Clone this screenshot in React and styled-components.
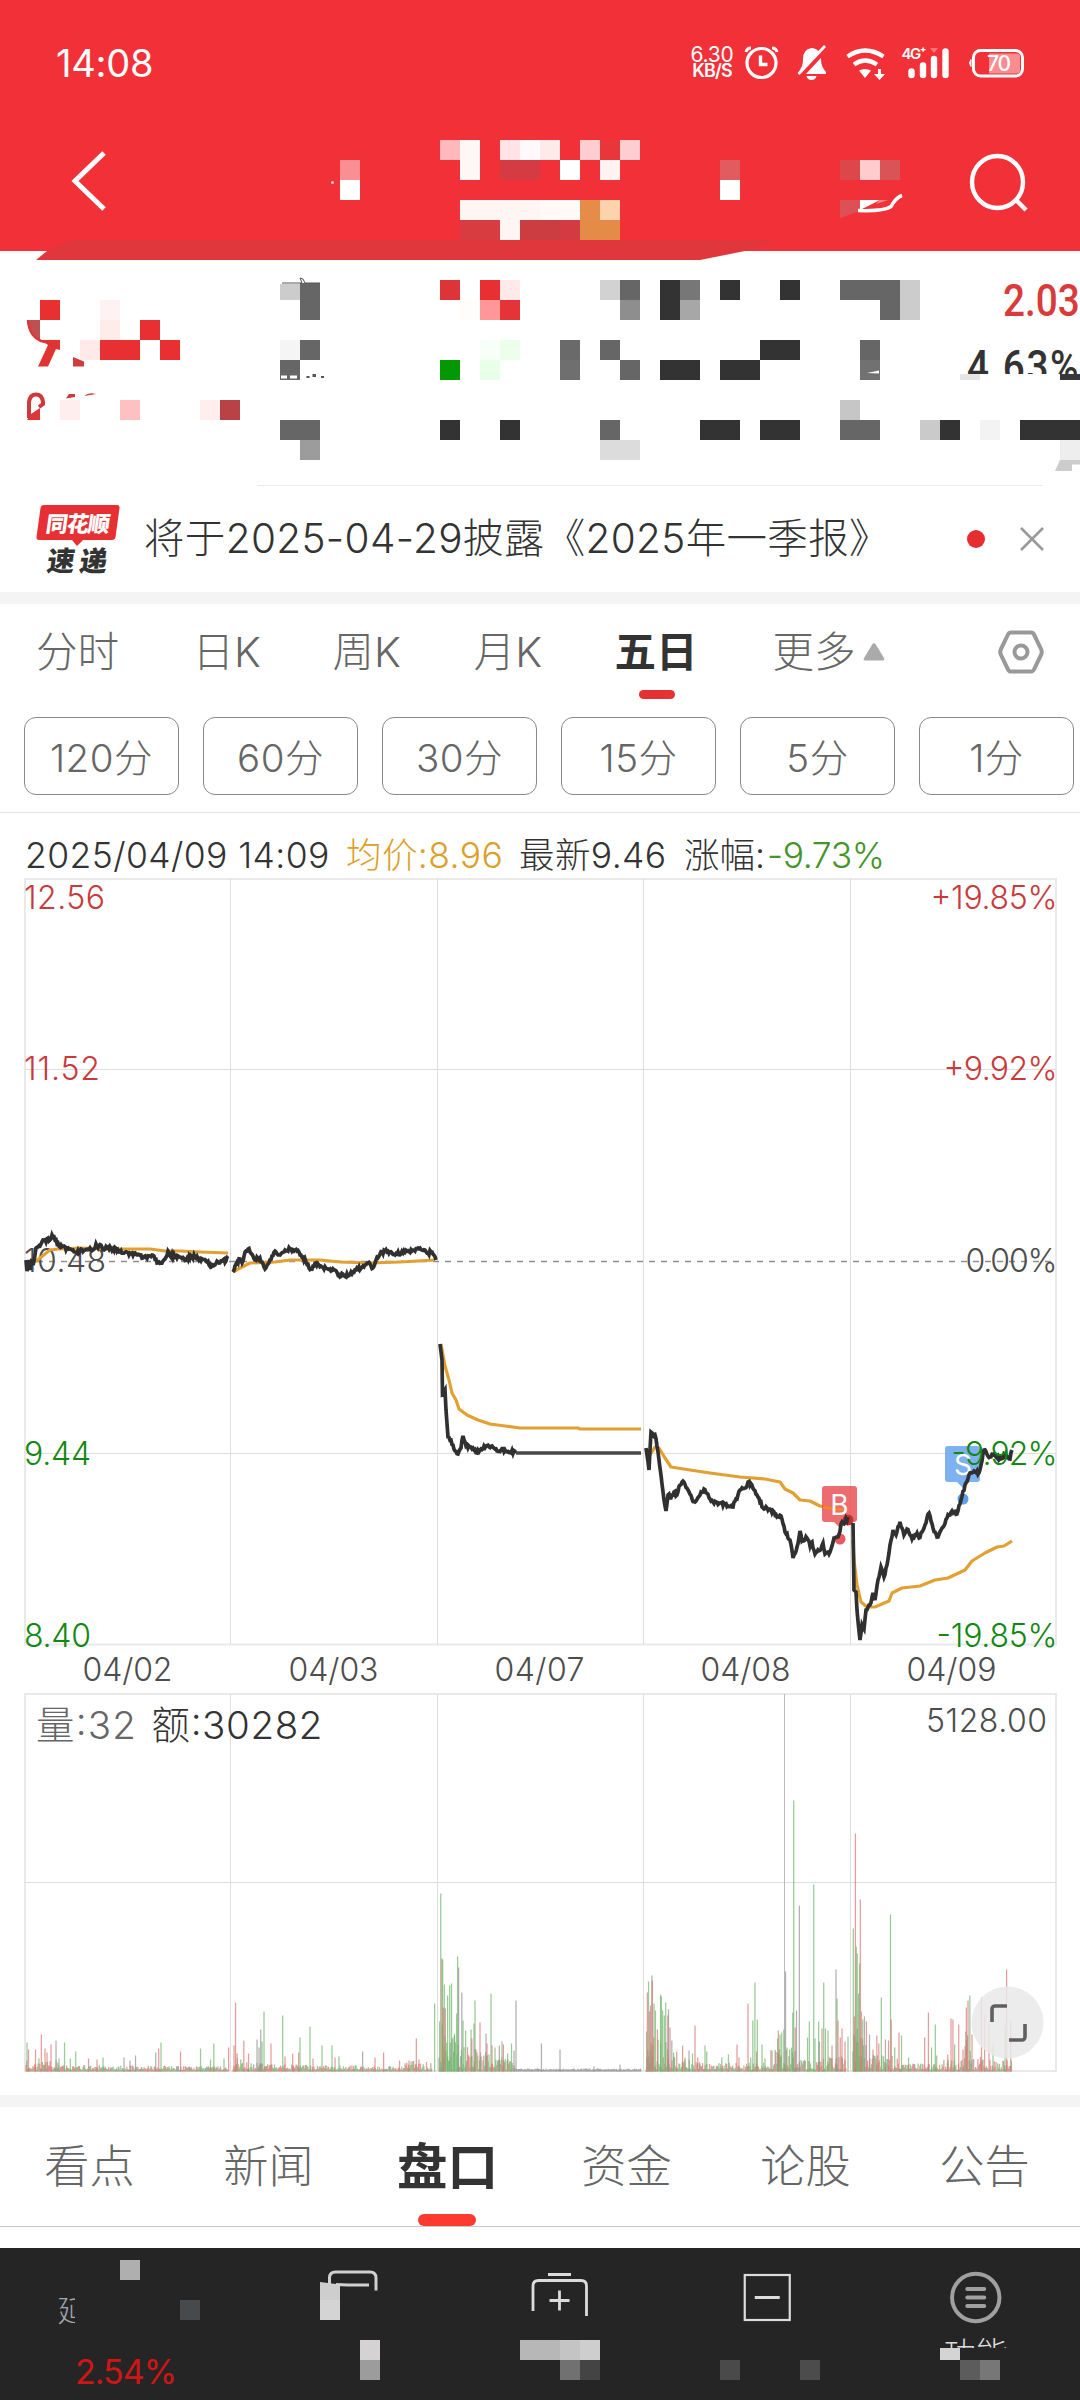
import React from 'react';
import styled, { createGlobalStyle } from 'styled-components';

const GlobalStyle = createGlobalStyle`
  * { box-sizing: border-box; }
  body {
    margin: 0;
    background: #fff;
    font-family: Inter, 'Noto Sans CJK SC', sans-serif;
    font-weight: 300;
    color: #333;
  }
`;

const Page = styled.div`
  width: 1080px;
  height: 2400px;
  overflow: hidden;
  display: flex;
  flex-direction: column;
  background: #fff;
`;

const Top = styled.div`
  position: relative;
  height: 485px;
  flex: none;
`;

const Header = styled.header`
  height: 251px;
  background: #f23038;
  color: #fff;
`;

const StatusBar = styled.div`
  height: 124px;
  padding: 2px 55px 0 56px;
  display: flex;
  align-items: center;
  justify-content: space-between;
`;

const Clock = styled.span`
  font-size: 38px;
  font-weight: 400;
  letter-spacing: -0.2px;
`;

const StatusIcons = styled.div`
  display: flex;
  align-items: center;
  svg { display: block; }
`;

const Speed = styled.div`
  width: 42px;
  margin-right: 10px;
  display: flex;
  flex-direction: column;
  align-items: center;
  font-size: 21px;
  line-height: 16px;
  font-weight: 400;
  letter-spacing: -0.3px;
  b {
    font-size: 18px;
    font-weight: 600;
    letter-spacing: -0.9px;
  }
`;

const TitleBar = styled.div`
  height: 116px;
  padding: 0 50px 0 70px;
  display: flex;
  align-items: center;
  justify-content: space-between;
`;

const Quote = styled.section`
  height: 234px;
  padding-top: 26px;
  display: flex;
  flex-direction: column;
  align-items: flex-end;
`;

const QuoteValue = styled.div`
  width: ${(p) => p.$width}px;
  height: ${(p) => p.$height}px;
  margin-bottom: ${(p) => p.$after || 0}px;
  overflow: hidden;
  white-space: nowrap;
  color: ${(p) => p.$color};
  font-family: Roboto, sans-serif;
  font-size: 45px;
  font-weight: 500;
  line-height: 48px;
  letter-spacing: ${(p) => p.$spacing || 0}px;
  span {
    display: inline-block;
    transform: scaleX(0.86);
    transform-origin: left;
  }
`;

const Mosaic = styled.svg`
  position: absolute;
  left: 0;
  top: 0;
  pointer-events: none;
`;

const Notice = styled.section`
  height: 107px;
  padding: 0 35px 0 36px;
  display: flex;
  align-items: center;
  flex: none;
`;

const Logo = styled.div`
  width: 84px;
  height: 74px;
  margin-right: 24px;
`;

const NoticeText = styled.div`
  flex: 1;
  font-size: 40.5px;
  letter-spacing: 0.35px;
  line-height: 60px;
  white-space: nowrap;
`;

const Dot = styled.i`
  width: 18px;
  height: 18px;
  border-radius: 50%;
  background: #e62e31;
  margin-right: 34px;
`;

const Band = styled.div`
  height: 12px;
  background: #f4f4f4;
  flex: none;
`;

const PeriodTabs = styled.nav`
  height: 113px;
  padding: 0 0 0 36px;
  display: flex;
  align-items: flex-start;
  flex: none;
  font-size: 41.5px;
  line-height: 60px;
  color: #666;
`;

const PeriodTab = styled.div`
  position: relative;
  margin: 18px ${(p) => p.$gap}px 0 0;
  display: flex;
  align-items: center;
  white-space: nowrap;
  font-weight: ${(p) => (p.$active ? 700 : 300)};
  color: ${(p) => (p.$active ? '#333' : '#666')};
  &::after {
    content: '';
    display: ${(p) => (p.$active ? 'block' : 'none')};
    position: absolute;
    left: 24px;
    top: 68px;
    width: 36px;
    height: 9px;
    border-radius: 5px;
    background: #e43234;
  }
`;

const MinuteRow = styled.div`
  height: 96px;
  padding-left: 24px;
  display: flex;
  gap: 24px;
  flex: none;
  border-bottom: 1px solid #e4e4e4;
`;

const MinuteButton = styled.div`
  width: 155px;
  height: 78px;
  padding-bottom: 3px;
  flex: none;
  display: flex;
  align-items: center;
  justify-content: center;
  border: 1px solid #888;
  border-radius: 12px;
  font-size: 38.5px;
  letter-spacing: 0.5px;
  color: #666;
`;

const InfoLine = styled.div`
  height: 65px;
  padding: 18px 0 0 25px;
  display: flex;
  flex: none;
  font-size: 35.5px;
  line-height: 50px;
  white-space: nowrap;
`;

const Info = styled.span`
  width: ${(p) => p.$width}px;
  color: ${(p) => p.$color || '#333'};
  letter-spacing: ${(p) => p.$spacing || 0}px;
`;

const ChartArea = styled.div`
  position: relative;
  height: 1217px;
  flex: none;
  svg { display: block; }
`;

const SectionTabs = styled.nav`
  height: 119px;
  width: 1074px;
  display: flex;
  flex: none;
`;

const SectionTab = styled.div`
  position: relative;
  flex: 1;
  padding-top: 27px;
  text-align: center;
  line-height: 66px;
  font-size: ${(p) => (p.$active ? 50.5 : 45.2)}px;
  font-weight: ${(p) => (p.$active ? 700 : 300)};
  color: ${(p) => (p.$active ? '#333' : '#666')};
  &::after {
    content: '';
    display: ${(p) => (p.$active ? 'block' : 'none')};
    position: absolute;
    left: 60px;
    bottom: 0;
    width: 58px;
    height: 12px;
    border-radius: 6px;
    background: #fc3a30;
  }
`;

const Gap = styled.div`
  height: 22px;
  flex: none;
  border-top: 1px solid #c8c8c8;
`;

const BottomNav = styled.footer`
  position: relative;
  flex: 1;
  background: #252525;
  display: flex;
`;

const NavItem = styled.div`
  width: ${(p) => p.$width || 208.5}px;
  padding-top: 20px;
  display: flex;
  flex-direction: column;
  align-items: center;
`;

const IndexName = styled.div`
  width: 17px;
  height: 32px;
  margin: 26px 114px 31px 0;
  overflow: hidden;
  font-size: 30px;
  line-height: 32px;
  color: #a3a8b0;
`;

const IndexChange = styled.div`
  padding-left: 5px;
  font-size: 34px;
  line-height: 30px;
  font-weight: 400;
  letter-spacing: -1px;
  color: #d01515;
`;

const NavLabel = styled.div`
  height: 13px;
  margin-top: 7px;
  overflow: hidden;
  font-size: 32px;
  line-height: 38px;
  color: #ddd;
`;

// [y, x, colour, width, height], on a 20px grid
const topTiles = [
  [140, 440, '#ffb9bc'], [140, 460, '#fff6f6'], [140, 500, '#ffe3e6'], [140, 520, '#fff9fb'],
  [140, 540, '#ffeaea'], [140, 580, '#fecdd2'], [140, 600, '#e8363a'], [140, 620, '#fecdd2'],
  [160, 340, '#f98e93'], [160, 460, '#fff6f6'], [160, 500, '#d53b42', 40], [160, 560, '#fff'],
  [160, 600, '#fff2f2'], [160, 720, '#e15b5f'], [160, 840, '#db474b'], [160, 860, '#ffcbcd'],
  [160, 880, '#d95357'], [180, 340, '#fff'], [180, 720, '#fff'],
  [200, 460, '#fff6f4', 80], [200, 540, '#fff9f8', 40], [200, 580, '#e58c48'], [200, 600, '#ffd2ae'],
  [220, 460, '#d83b40', 40], [220, 500, '#fff6f4'], [220, 520, '#cb3d41', 40], [220, 560, '#d33a41'],
  [220, 580, '#e48c47', 40],
  [284, 280, '#ccc', 20, 16], [283, 300, '#666', 20, 37], [280, 440, '#dd3437'], [280, 480, '#e83032'],
  [280, 500, '#ffe9e9'], [280, 600, '#d2d2d2'], [280, 620, '#666'], [280, 660, '#333', 20, 40],
  [280, 680, '#777'], [280, 720, '#333'], [280, 780, '#333'], [280, 840, '#666', 60],
  [280, 900, '#ccc', 20, 40],
  [300, 40, '#e83032'], [300, 100, '#fff2f2'], [300, 460, '#fffcfc'], [300, 480, '#ff9698'],
  [300, 500, '#e43437'], [300, 620, '#8e8e8e'], [300, 680, '#a7a7a7'], [300, 880, '#666'],
  [320, 100, '#ffebe9'], [320, 140, '#e83032'],
  [340, 80, '#ffe9e9'], [340, 100, '#e83032', 40], [340, 160, '#e83032'], [340, 280, '#f5f5f5'],
  [340, 300, '#666'], [340, 480, '#f8fff8'], [340, 500, '#ebffeb'], [340, 560, '#6a6a6a'],
  [340, 600, '#666'], [340, 760, '#333', 40], [340, 860, '#666'],
  [360, 280, '#666'], [360, 440, '#059805'], [360, 480, '#e8ffe8'], [360, 560, '#6f6f6f'],
  [360, 620, '#666'], [360, 660, '#333', 40], [360, 720, '#333', 40], [360, 860, '#717171'],
  [374, 960, '#e5e5e5', 20, 6], [374, 1060, '#383838', 20, 6],
  [400, 60, '#fee'], [400, 120, '#ffc0c2'], [400, 200, '#fee'], [400, 220, '#b94246'], [400, 840, '#c6c6c6'],
  [420, 280, '#666', 40], [420, 440, '#333'], [420, 500, '#333'], [420, 600, '#666'],
  [420, 700, '#333', 40], [420, 760, '#333', 40], [420, 840, '#666', 40], [420, 920, '#cacaca'],
  [420, 940, '#333'], [420, 980, '#f3f3f3'], [420, 1020, '#333', 60],
  [440, 300, '#9c9c9c'], [440, 600, '#dcdcdc', 40], [440, 1060, '#eee'],
];

const navTiles = [
  [12, 120, '#afafaf'], [52, 180, '#464a4d'], [92, 360, '#d4d2d2'], [112, 360, '#9c9c9c'],
  [92, 520, '#b7b7b7', 40], [92, 560, '#c5c4c4'], [92, 580, '#cfcece'], [112, 560, '#717171'],
  [112, 580, '#444'], [112, 720, '#4a4a4a'], [112, 800, '#4c4c4c'], [100, 940, '#d4d4d4', 20, 12],
  [112, 960, '#5c5c5c'], [112, 980, '#777'], [52, 320, '#d4d4d4'],
];

const Tiles = ({ data }) =>
  data.map(([y, x, fill, w = 20, h = 20]) => (
    <rect key={`${x}-${y}`} x={x} y={y} width={w} height={h} fill={fill} shapeRendering="crispEdges" />
  ));

// small repeatable noise
const noise = (n) => {
  const v = Math.sin(n * 127.1 + 11.7) * 43758.5453;
  return v - Math.floor(v);
};

const priceDays = [
  '26,1260 27,1271 29,1260 30,1270 32,1259 33,1265 35,1255 36,1248 40,1246 43,1240 46,1242 48,1238 50,1240 52,1235 55,1240 58,1243 60,1247 64,1246 66,1250 70,1249 75,1252 80,1251 85,1250 90,1248 93,1250 96,1244 98,1248 101,1245 104,1250 108,1247 113,1249 118,1250 123,1253 130,1253 137,1255 143,1258 150,1256 154,1256 157,1263 162,1263 165,1259 168,1251 170,1256 176,1256 180,1257 186,1260 192,1256 200,1259 207,1262 212,1266 218,1262 222,1261 226,1261 228,1256',
  '233,1272 236,1264 240,1259 242,1263 246,1251 248,1249 250,1252 253,1256 255,1260 258,1258 262,1262 265,1269 268,1264 272,1256 276,1252 280,1255 284,1252 290,1249 295,1250 299,1252 302,1257 306,1262 311,1269 316,1263 322,1267 328,1269 334,1270 340,1277 343,1274 348,1276 353,1272 358,1269 363,1266 367,1263 370,1264 373,1268 376,1260 380,1254 385,1251 390,1252 397,1254 405,1252 412,1251 418,1248 422,1250 427,1253 432,1252 436,1260',
  '440,1344 442,1360 442.5,1395 445,1390 446,1410 448,1437 451,1440 455,1451 458,1454 461,1448 463,1436 466,1446 470,1447 474,1450 477,1453 481,1449 486,1446 492,1446 497,1451 505,1450 516,1453',
  '646,1448 647,1455 649,1470 650,1450 651,1432 655,1435 657,1446 659,1460 661,1475 664,1500 666,1511 668,1495 671,1498 674,1492 677,1495 680,1485 684,1482 688,1490 692,1499 695,1502 700,1495 704,1489 710,1499 713,1502 720,1503 732,1507 737,1499 740,1490 745,1488 748,1482 752,1485 757,1495 763,1508 770,1509 775,1515 781,1516 785,1532 790,1540 793,1558 797,1547 800,1531 802,1541 807,1538 810,1546 812,1542 815,1554 821,1549 823,1543 825,1554 830,1552 834,1538 838,1537 842,1522 845,1522 848,1517',
  '853,1523 854,1590 856,1592 857,1610 860,1640 862,1625 864,1629 866,1610 870,1605 873,1593 875,1600 878,1580 881,1567 884,1577 887,1565 890,1545 893,1530 896,1535 900,1522 904,1535 907,1529 912,1539 917,1533 919,1538 925,1525 929,1513 933,1528 937,1537 942,1528 947,1518 952,1511 957,1514 961,1500 965,1485 970,1473 974,1471 979,1473 984,1450 990,1457 995,1455 1000,1459 1005,1455 1010,1459 1012,1450',
];

const averageDays = [
  '35,1262 40,1258 50,1250 58,1249 80,1248 110,1249 150,1249 165,1251 180,1251 200,1252 228,1253',
  '233,1272 240,1268 250,1263 275,1262 290,1260 320,1260 340,1262 370,1263 400,1262 435,1260',
  '441,1344 445,1366 449,1380 452,1393 456,1400 459,1409 467,1415 478,1420 490,1424 505,1426 520,1428 578,1428 580,1429 641,1429',
  '650,1455 655,1447 659,1448 665,1458 671,1467 690,1470 710,1473 740,1477 765,1479 780,1482 785,1489 793,1493 800,1500 810,1501 820,1506 835,1509 847,1510',
  '853,1540 854,1560 857,1585 861,1602 867,1607 875,1607 882,1604 889,1601 892,1593 902,1588 920,1586 935,1580 948,1578 965,1570 972,1561 985,1553 997,1547 1004,1546 1012,1541',
];

// fills in the ticks between two points of a day's line
const jagged = (day) => {
  const pts = day.split(' ').map((p) => p.split(',').map(Number));
  const out = [];
  pts.forEach(([x, y], i) => {
    out.push(`${x},${y}`);
    const next = pts[i + 1];
    if (!next) return;
    for (let t = x + 1; t < next[0]; t += 1) {
      const k = (t - x) / (next[0] - x);
      out.push(`${t},${(y + (next[1] - y) * k + (noise(t) - 0.5) * 4).toFixed(1)}`);
    }
  });
  return out.join(' ');
};

// x, height, colour key
const volume =
  '27,29g 28.5,22r 35.5,22r 41.3,37r 45,23r 47,19r 51,27r 56,31k 59,13g 64.5,29g 70.3,13g 75.7,20g 88.5,13r 97,12r 103,14g 124,14k 130,11k 135.5,16k 155.7,19k 158.7,23r 161,29g 180.5,20r 200.5,23g 210.5,12g 213.8,28g 224,13g 228.6,24r ' +
  '234,26r 235.5,69r 237,18r 243.8,31r 248.5,18r 257,32k 259,24k 260.7,42k 262,30g 264,60g 271,28r 282.7,56g 285,15r 292.7,18r 298.6,19r 300,34g 310,45g 313,13r 322,26g 332,26g 335,14r 339,15g 362.6,20k 375,14r 383.6,19r 399.5,11r 409,11r 416.3,33r 419,12r 434.6,68g ' +
  '439.6,50g 440.7,178g 441.8,113r 442.6,112g 443.4,64r 444.3,87g 445.3,63r 447.6,76g 449.7,86g 451.5,88g 453,34g 454.5,36g 456.6,58g 457.6,115g 458.6,104k 461.8,79k 463,51g 465.6,41g 471,42g 471.8,33r 474,48k 475,71g 480,49r 486,38k 487,28r 491,78g 492,26r 495,24g 499.3,26k 502,30g 503.4,27r 507.6,18g 511.5,28g 514,21k 516,71k 541.4,28k 560,22k 594,5k 620,7k ' +
  '646.7,40g 647.3,79r 648.5,90g 649.5,60r 650.5,66r 651.8,96k 652.4,91r 654,68g 655.4,61g 657.4,42r 660.5,77g 661.3,75g 662.6,61g 664.3,56g 665.7,69g 667.8,56r 668.5,62k 670,44r 673.6,19g 676.7,20r 682.6,26r 685,14g 689,21k 692.5,18g 695,46r 697.7,14r 705,26g 706.7,20g 721.8,14g 728.4,17g 737,27r 739,14r 748,68r 750.7,14g 752.8,51g 754.9,89g 756.6,20r 757.3,52g 762,27g 765,13g 772,21g 777.6,33g 778.3,41r 780,37g 781.7,39g 783.8,42g 785.5,100k 787,24g 789.6,22g 792.7,59g 793.7,271g 795.2,44r 796.5,61k 799.3,166k 807.5,34g 809.3,50g 813.7,187g 815,33g 818.6,50g 819.3,30k 822,43r 823.7,89g 825.4,43g 828,41g 832,26r 836,102k 837,73g 838,51r 840.2,34r 842,43r 845,30r 848,35g ' +
  '853.3,143g 854.4,55r 855.4,238r 856.2,125g 857.2,118g 858.5,78g 859.5,108g 860.3,172r 861.3,60r 862.7,52g 864.4,55k 866.4,50r 869.5,37k 873,22r 876.8,36r 878.8,28r 881.3,74g 885.4,32k 888.5,31r 890.5,157g 891.2,52r 894.7,24g 899,39r 901.5,36g 908.5,14g 924.6,34r 928.4,59r 931.5,24g 935.3,47g 936.7,16g 947.7,17r 951,53r 952.9,52r 954.6,27g 958.7,47r 963,22r 966.3,64r 968,71r 969.8,76g 972,37r 981.5,74r 984.6,57r 989,48r 993,27g 1005,46g 1006.6,102r 1010.7,50r';

const barColors = { g: '#6db569', r: '#dd7272', k: '#8f8f8f' };

// typical height of the unremarkable minutes: from, to, start height, end height
const baseVolume = [
  [26, 58, 13, 10], [58, 228, 5, 4], [233, 265, 13, 8], [265, 405, 6, 4], [405, 432, 9, 9],
  [439, 458, 60, 34], [458, 515, 26, 10], [516, 641, 1.6, 1.6],
  [646, 672, 36, 30], [672, 700, 14, 8], [700, 770, 7, 8], [770, 795, 26, 26], [795, 846, 10, 14],
  [853, 868, 50, 26], [868, 900, 16, 14], [900, 943, 7, 7], [943, 965, 13, 12], [965, 971, 50, 44], [971, 1012, 14, 10],
];

const bars = [];
baseVolume.forEach(([from, to, a, b]) => {
  for (let x = from; x < to; x += 0.86) {
    const top = a + ((b - a) * (x - from)) / (to - from);
    const pick = noise(x * 3.3);
    let key = pick < 0.44 ? 'g' : pick < 0.86 ? 'r' : 'k';
    if (a < 2) key = 'k';
    if (from === 439 && pick < 0.8) key = 'g';
    bars.push([x, 1.5 + top * noise(x * 1.7) ** 1.3, key]);
  }
});
volume.split(' ').forEach((item) => {
  const [x, rest] = item.split(',');
  bars.push([Number(x), parseFloat(rest), rest.slice(-1)]);
});

const columns = [230.5, 437.5, 643.5, 850.5];

const priceLabels = [
  ['12.56', 909, '#c83a3c', 81], ['11.52', 1080, '#c83a3c', 76], ['10.48', 1272, '#4d4d4d', 82],
  ['9.44', 1465, '#128712', 67], ['8.40', 1647, '#128712', 67],
];
const percentLabels = [
  ['+19.85%', 909, '#c83a3c', 127], ['+9.92%', 1080, '#c83a3c', 114], ['0.00%', 1272, '#4d4d4d', 92],
  ['-9.92%', 1465, '#128712', 106], ['-19.85%', 1647, '#128712', 121],
];
const dates = ['04/02', '04/03', '04/07', '04/08', '04/09'];

const Chart = () => (
  <svg width="1080" height="1217" viewBox="0 878 1080 1217" fontFamily="Inter, 'Noto Sans CJK SC', sans-serif" fontWeight="300">
    <g fill="none" stroke="#e9e9e9" strokeWidth="2">
      <rect x="25" y="879" width="1031" height="765.5" />
      <rect x="25" y="1694" width="1031" height="377" />
    </g>
    <g stroke="#dedede" strokeWidth="1">
      {columns.map((x) => (
        <path key={x} d={`M${x} 878V1644M${x} 1694V2071`} />
      ))}
      <path d="M25 1069.5H1056M25 1453.5H1056M25 1882.5H1056" />
    </g>
    <path d="M25 1261.5H1056" stroke="#8f8f8f" strokeWidth="1.5" strokeDasharray="6 6" />
    <path d="M784.5 1694V2071" stroke="#bbb" />
    {bars.map(([x, h, key], i) => (
      <rect key={i} x={x - 0.6} y={2071.5 - h} width="1.25" height={h} fill={barColors[key]} opacity="0.7" />
    ))}
    <g fontSize="32">
      {priceLabels.map(([label, y, fill, w]) => (
        <text key={label} x="24" y={y} fill={fill} textLength={w}>{label}</text>
      ))}
      {dates.map((d, i) => (
        <text key={d} x={82.5 + i * 206} y="1681" fill="#4d4d4d" textLength="90">{d}</text>
      ))}
      <text x="926" y="1732" fill="#4d4d4d" textLength="121">5128.00</text>
    </g>
    <g fontSize="38.5">
      <text x="36" y="1739" fill="#666" textLength="100">量:32</text>
      <text x="151.5" y="1739" fill="#333" textLength="171">额:30282</text>
    </g>
    <g fill="none" stroke="#e2a032" strokeWidth="3.2" strokeLinejoin="round">
      {averageDays.map((d) => <polyline key={d} points={d} />)}
    </g>
    <g fill="#e8474b">
      <path d="M825 1486h29a3 3 0 0 1 3 3v30a3 3 0 0 1-3 3h-8l-6 6-6-6h-9a3 3 0 0 1-3-3v-30a3 3 0 0 1 3-3z" opacity=".8" />
      <circle cx="840" cy="1539" r="5.5" opacity=".9" />
      <circle cx="848" cy="1520" r="5.5" fill="#c62f33" />
    </g>
    <g fill="#5d9dec">
      <path d="M948 1446h29a3 3 0 0 1 3 3v30a3 3 0 0 1-3 3h-8l-6 6-6-6h-9a3 3 0 0 1-3-3v-30a3 3 0 0 1 3-3z" opacity=".8" />
      <circle cx="963" cy="1499" r="5.5" />
    </g>
    <path d="M823 1507L835 1509 847 1510" fill="none" stroke="#f0882c" strokeWidth="3" />
    <g fill="#fff" fontSize="28" fontWeight="400" textAnchor="middle">
      <text x="839.5" y="1515">B</text>
      <text x="963" y="1475">S</text>
    </g>
    <g fill="none" stroke="#303030" strokeWidth="3.7" strokeLinejoin="miter">
      {priceDays.map((d) => <polyline key={d} points={jagged(d)} />)}
      <path d="M516 1453H641" stroke="#484848" />
    </g>
    <g fontSize="32" textAnchor="end">
      {percentLabels.map(([label, y, fill, w]) => (
        <text key={label} x="1057.5" y={y} fill={fill} textLength={w}>{label}</text>
      ))}
    </g>
    <circle cx="1007.5" cy="2022.5" r="36" fill="#e9e9e9" opacity=".86" />
    <path d="M992 2022V2009a3 3 0 0 1 3-3H1007M1025 2024V2037a3 3 0 0 1-3 3H1009" fill="none" stroke="#606060" strokeWidth="3.6" />
  </svg>
);

const periods = [
  ['分时', 73.5], ['日K', 71.5], ['周K', 73], ['月K', 72.5], ['五日', 75],
];
const minutes = ['120分', '60分', '30分', '15分', '5分', '1分'];
const sections = ['看点', '新闻', '盘口', '资金', '论股', '公告'];

export default function App() {
  return (
    <Page>
      <GlobalStyle />
      <Top>
        <Header>
          <StatusBar>
            <Clock>14:08</Clock>
            <StatusIcons>
              <Speed>
                <span>6.30</span>
                <b>KB/S</b>
              </Speed>
              <svg width="282" height="40" viewBox="743 43 282 40" fill="none" stroke="#fff">
                <circle cx="761.5" cy="63" r="14.5" strokeWidth="3.2" />
                <path d="M760.5 55.5V64.5H767.5" strokeWidth="3.4" />
                <path d="M746 52q1-4 5-4M777 52q-1-4-5-4" strokeWidth="3" />
                <path d="M801 68q2-3 2-9q0-10 9-11q9 1 9 11q0 8 5 13v2H798z" fill="#fff" stroke="none" />
                <path d="M806.5 76h10q-1 4-5 4t-5-4z" fill="#fff" stroke="none" />
                <path d="M800 76L827 47" stroke="#f23038" strokeWidth="6" />
                <path d="M798.5 74L825 46" strokeWidth="2.8" />
                <path d="M847.5 56.5q17.5-12 36 0M854 64.5q11-8 23 0" strokeWidth="4.2" />
                <path d="M859 70.5q6-3 12 0l-6 7.5z" fill="#fff" stroke="none" />
                <path d="M879.5 69v7" strokeWidth="3" />
                <path d="M874 74h11l-5.5 6z" fill="#fff" stroke="none" />
                <path d="M911.5 71.5V75M923 65.5V75M934 59V75M945.5 51.5V75" strokeWidth="6.4" strokeLinecap="round" />
                <path d="M930 48h8l-4 5z" fill="#f9777c" stroke="none" />
                <text x="901.5" y="59" fill="#fff" stroke="none" fontSize="15" fontWeight="600" textLength="25">4G⁺</text>
                <rect x="973.5" y="50.5" width="49" height="25.5" rx="7" strokeWidth="3" />
                <path d="M989 53.5h28a3 3 0 0 1 3 3v14a3 3 0 0 1-3 3h-28z" fill="#f98c91" stroke="none" />
                <path d="M971 59.5q-3 3.5 0 7z" fill="#fff" strokeWidth="1" />
                <text x="987" y="70.500" fill="#fff" stroke="none" fontSize="21" fontWeight="500" textLength="24">70</text>
              </svg>
            </StatusIcons>
          </StatusBar>
          <TitleBar>
            <svg width="40" height="64" viewBox="70 150 40 64" fill="none" stroke="#fff" strokeWidth="5">
              <path d="M104 153L75 181 104 209" />
            </svg>
            <svg width="64" height="64" viewBox="966 150 64 64" fill="none" stroke="#fff" strokeWidth="4.4">
              <ellipse cx="997.5" cy="182" rx="25.5" ry="26" />
              <path d="M1015.500 199.500L1026 210" />
            </svg>
          </TitleBar>
        </Header>
        <Quote>
          <QuoteValue $width={77} $height={48} $after={18} $color="#d93a3a">
            <span>2.03</span>
          </QuoteValue>
          <QuoteValue $width={113} $height={31} $spacing={1.8} $color="#333">
            <span>4.63%</span>
          </QuoteValue>
        </Quote>
        <Mosaic width="1080" height="486" viewBox="0 0 1080 486">
          <path d="M36 260L47 251 72 240H775L745 251 700 260z" fill="#e0373d" />
          <Tiles data={topTiles} />
          <circle cx="332.5" cy="182.5" r="1.5" fill="#ffd0d2" />
          <path d="M840 200h20v11l-20 7z" fill="#dd5156" />
          <path d="M860 200h20l-20 10z" fill="#fff" />
          <path d="M880 200h8l-12 4z" fill="#f7888c" />
          <path d="M858 210.5q26 1 33-4q5-9 11-11" fill="none" stroke="#fff" strokeWidth="3.5" />
          <path d="M27 320h13v20q-12-6-13-20z" fill="#be5051" />
          <path d="M28 320q1 16 13 21l9 2" fill="none" stroke="#db383a" strokeWidth="2.5" />
          <path d="M41 340h19v10l-4-1-8 17.5H38l10-21.5z" fill="#e03432" />
          <path d="M73 357l11 4.5v5H73z" fill="#cf3c3c" />
          <path d="M29 418V402q1-7.5 7-7.5t7 7.5v2l-4 3" fill="none" stroke="#d0393b" strokeWidth="4" />
          <path d="M31 414l9-6v12H27z" fill="#dc3638" />
          <path d="M66 398.500l3-4.500h6v3zM84 396q5-4 12-2z" fill="#d0393b" />
          <path d="M282 283h20l-2-5 3 1 2 4h15" fill="none" stroke="#555" />
          <path d="M281 375.5h6v3h-6zM290 375.5h7v3h-7zM867 373l12-2.5v3z" fill="#fff" />
          <path d="M306.5 376h3v2h-3zM312.5 374h3.5v3h-3.5zM321 376h3v2h-3z" fill="#555" />
          <path d="M1060 460h20v4.5h-8V471h-17z" fill="#ccc" />
          <path d="M257 485.500H1043" stroke="#eaeaea" />
        </Mosaic>
      </Top>
      <Notice>
        <Logo>
          <svg width="84" height="74" viewBox="36 501 84 74" fontWeight="900">
            <path d="M44 504h73q3 0 2.500 3l-4 29q-.5 3-3.500 3H83l-6 6-5-6H39q-3 0-2.500-3l4-29q.5-3 3.500-3z" fill="#e63033" />
            <text transform="translate(45 530.500) skewX(-8)" fontSize="22" fill="#fff" textLength="64">同花顺</text>
            <text transform="translate(46 569.500) skewX(-8)" fontSize="27.500" fill="#333" textLength="60">速递</text>
          </svg>
        </Logo>
        <NoticeText>将于2025-04-29披露《2025年一季报》</NoticeText>
        <Dot />
        <svg width="26" height="26" viewBox="0 0 26 26" stroke="#999" strokeWidth="2.5">
          <path d="M2 2L24 24M24 2L2 24" />
        </svg>
      </Notice>
      <Band />
      <PeriodTabs>
        {periods.map(([name, gap]) => (
          <PeriodTab key={name} $gap={gap} $active={name === '五日'}>{name}</PeriodTab>
        ))}
        <PeriodTab $gap={113}>
          更多
          <svg width="22" height="18" viewBox="0 0 22 18" style={{ marginLeft: 7 }}>
            <path d="M9.500 1q1.500-1.500 3 0l8.500 14q1 2.500-1.500 2.500h-17q-2.500 0-1.500-2.500z" fill="#aaa" />
          </svg>
        </PeriodTab>
        <svg width="46" height="46" viewBox="-23 -23 46 46" fill="none" stroke="#999" strokeWidth="4" strokeLinejoin="round" style={{ marginTop: 25 }}>
          <path d="M-10-19.500H10q2 0 3 2L20-3q1.500 3 0 6L13 17.500q-1 2-3 2H-10q-2 0-3-2L-20 3q-1.500-3 0-6L-13-17.500q1-2 3-2z" />
          <circle r="6.500" />
        </svg>
      </PeriodTabs>
      <MinuteRow>
        {minutes.map((m) => <MinuteButton key={m}>{m}</MinuteButton>)}
      </MinuteRow>
      <InfoLine>
        <Info $width={321} $spacing={0.4}>2025/04/09 14:09</Info>
        <Info $width={173} $spacing={0.4} $color="#dc9f2a">均价:8.96</Info>
        <Info $width={165} $spacing={0.4}>最新9.46</Info>
        <Info $width={83}>涨幅:</Info>
        <Info $width={130} $spacing={-0.4} $color="#459429">-9.73%</Info>
      </InfoLine>
      <ChartArea>
        <Chart />
      </ChartArea>
      <Band />
      <SectionTabs>
        {sections.map((s) => <SectionTab key={s} $active={s === '盘口'}>{s}</SectionTab>)}
      </SectionTabs>
      <Gap />
      <BottomNav>
        <NavItem $width={246}>
          <IndexName>延</IndexName>
          <IndexChange>2.54%</IndexChange>
        </NavItem>
        <NavItem>
          <svg width="60" height="60" viewBox="320 2268 60 60" fill="none" stroke="#d0d0d0" strokeWidth="3">
            <path d="M320 2282l20 2.500V2300h-20z" fill="#cecece" stroke="none" />
            <path d="M329.500 2284V2278q0-6 6-6H370q6 0 6 6V2290.500M336 2284.500l12 .5H369" />
          </svg>
        </NavItem>
        <NavItem>
          <svg width="60" height="60" viewBox="529 2268 60 60" fill="none" stroke="#dcdcdc" strokeWidth="2.800">
            <path d="M533 2311V2286q0-5.500 5.500-5.500H581q5.500 0 5.500 5.500V2316M548 2274.500H571M549.500 2300.500H569.500M559.500 2290.500V2310.500" />
          </svg>
        </NavItem>
        <NavItem>
          <svg width="60" height="60" viewBox="737.250 2268 60 60" fill="none" stroke="#dcdcdc" strokeWidth="2.200">
            <rect x="745" y="2275" width="45" height="45" />
            <path d="M755 2297.500H780" strokeWidth="3" />
          </svg>
        </NavItem>
        <NavItem>
          <svg width="60" height="60" viewBox="945.750 2268 60 60" fill="none" stroke="#a0a0a0" strokeWidth="4" strokeLinecap="round">
            <circle cx="975.500" cy="2297.500" r="23.700" />
            <path d="M967 2289H984M967 2297.500H984M967 2306H984" />
          </svg>
          <NavLabel>功能</NavLabel>
        </NavItem>
        <Mosaic width="1080" height="152" viewBox="0 0 1080 152">
          <Tiles data={navTiles} />
        </Mosaic>
      </BottomNav>
    </Page>
  );
}
